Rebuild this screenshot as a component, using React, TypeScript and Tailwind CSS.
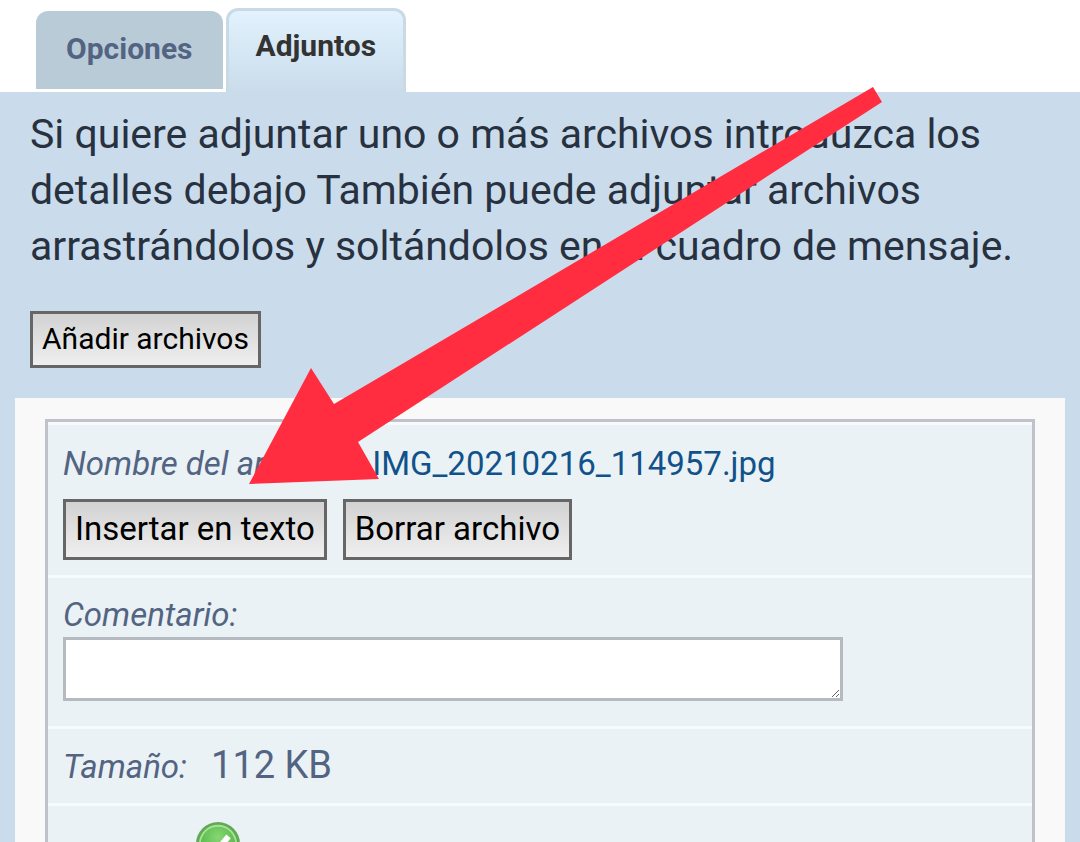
const tabs = [
  { id: 'options', label: 'Opciones', active: false },
  { id: 'attachments', label: 'Adjuntos', active: true },
]

const file = { name: 'IMG_20210216_114957.jpg', size: '112 KB' }

const buttonStyle = 'border-3 border-[#666666] bg-linear-to-b from-[#d2d2d2] to-[#efefef] px-[9px] pb-0.5 text-black cursor-pointer hover:border-[#bc2a4d]'
const rowStyle = 'w-full border-t-3 border-[#f7fbfd] bg-[#eaf2f6] px-[15px]'

function Tabs() {
  return (
    <nav className='flex items-end pl-9 pt-2'>
      {
        tabs.map((tab) => tab.active ? (
          <a key={tab.id} href={`#${tab.id}`} className='h-[84px] rounded-t-xl border-3 border-b-0 border-[#cadae4] bg-linear-to-b from-[#e2f2fe] to-[#cadceb] px-[27px] pt-[15px] text-[30px] leading-10 font-bold text-[#333333]'>{tab.label}</a>
        ) : (
          <a key={tab.id} href={`#${tab.id}`} className='mb-[3px] mr-[3px] h-[78px] rounded-t-xl bg-[#bacbd8] px-[30px] pt-[18px] text-[30px] leading-10 font-bold text-[#536482]'>{tab.label}</a>
        ))
      }
    </nav>
  )
}

function StatusIcon() {
  return (
    <svg viewBox='1 1 46 46' className='size-11' role='img' aria-label='Archivo subido'>
      <defs>
        <radialGradient id='ok' cx='0.5' cy='0.3' r='0.7'>
          <stop offset='0' stopColor='#86d873' />
          <stop offset='1' stopColor='#4cb040' />
        </radialGradient>
      </defs>
      <circle cx='24' cy='24' r='23' fill='#62a956' />
      <circle cx='24' cy='24' r='20' fill='#a5e295' />
      <circle cx='24' cy='24' r='18' fill='url(#ok)' />
      <path d='M13 25l8 8L35 16' fill='none' stroke='#ffffff' strokeWidth='6' />
    </svg>
  )
}

function Arrow() {
  return (
    <svg viewBox='0 0 633 397' className='pointer-events-none absolute left-[249px] top-[87px] h-[397px] w-[633px]' aria-hidden='true'>
      <path d='M624 0L633 15L109 355L130 392L0 397L62 281L85 317Z' fill='#ff2d3f' />
    </svg>
  )
}

function FileCard() {
  return (
    <div className='w-full border-3 border-b-0 border-[#bfc1cb] text-[33px] text-[#536482]'>
      <div className={`${rowStyle} py-[15px]`}>
        <div className='mb-3 flex leading-[47px]'>
          <span className='mr-6 italic'>Nombre del archivo:</span>
          <a href='#file' className='text-[#105289] hover:underline'>{file.name}</a>
        </div>
        <div className='flex gap-4'>
          <button type='button' className={`${buttonStyle} h-[61px]`}>Insertar en texto</button>
          <button type='button' className={`${buttonStyle} h-[61px]`}>Borrar archivo</button>
        </div>
      </div>
      <div className={`${rowStyle} pt-[15px] pb-[25px]`}>
        <label htmlFor='comment' className='block italic leading-11'>Comentario:</label>
        <textarea id='comment' rows={1} className='block h-16 w-[780px] max-w-full resize border-3 border-[#b4bac0] bg-white px-2 outline-none' />
      </div>
      <div className={`${rowStyle} flex items-baseline py-3 leading-12`}>
        <span className='mr-6 italic'>Tamaño:</span>
        <span className='text-[38px]'>{file.size}</span>
      </div>
      <div className={`${rowStyle} flex py-4`}>
        <span className='ml-[133px]'><StatusIcon /></span>
      </div>
    </div>
  )
}

function App() {
  return (
    <div className='relative h-screen overflow-hidden bg-white font-[Roboto,sans-serif]'>
      <Tabs />
      <main className='min-h-full bg-[#cadceb] px-[15px] pt-[14px]'>
        <div className='px-[15px]'>
          <p className='text-[41px] leading-14 text-[#28313f]'>
            Si quiere adjuntar uno o más archivos introduzca los detalles debajo También puede adjuntar archivos arrastrándolos y soltándolos en el cuadro de mensaje.
          </p>
          <button type='button' className={`${buttonStyle} mt-[37px] mb-[30px] block h-[57px] text-[30px]`}>Añadir archivos</button>
        </div>
        <div className='bg-[#f9f9f9] px-[30px] pt-[21px]'>
          <FileCard />
        </div>
      </main>
      <Arrow />
    </div>
  )
}

export default App
